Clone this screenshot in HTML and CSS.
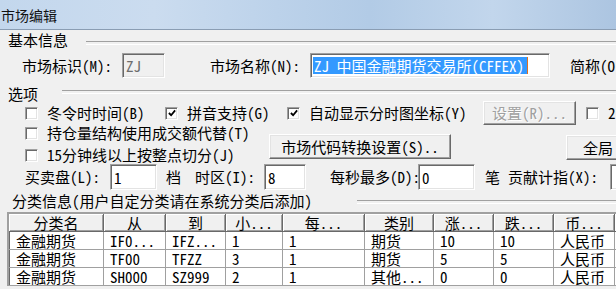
FILE: index.html
```html
<!DOCTYPE html>
<html lang="zh">
<head>
  <meta charset="UTF-8">
  <title>市场编辑</title>
  <link rel="stylesheet" href="styles.css">
</head>
<body>
  <div class="dialog">
    <div class="titlebar">市场编辑</div>

    <div class="panel">
      <div class="group-head head-basic"><span>基本信息</span></div>
      <div class="row row-basic">
        <span class="lbl w-id">市场标识(M):</span>
        <div class="field field-id">ZJ</div>
        <span class="lbl w-name">市场名称(N):</span>
        <div class="field field-name"><span class="sel">ZJ 中国金融期货交易所(CFFEX)</span></div>
        <span class="lbl">简称(O</span>
      </div>

      <div class="group-head head-opts"><span>选项</span></div>
      <div class="row row-a">
        <label class="check w-dst"><span class="box"></span>冬令时时间(B)</label>
        <label class="check w-pinyin"><span class="box"><svg viewBox="0 0 9 9"><path d="M1 4.5 L3.5 7 L8 1.5"/></svg></span>拼音支持(G)</label>
        <label class="check w-auto"><span class="box"><svg viewBox="0 0 9 9"><path d="M1 4.5 L3.5 7 L8 1.5"/></svg></span>自动显示分时图坐标(Y)</label>
        <button class="btn btn-set" disabled>设置(R)...</button>
        <label class="check"><span class="box"></span>2</label>
      </div>

      <div class="row row-bc">
        <div class="col-checks">
          <label class="check"><span class="box"></span>持仓量结构使用成交额代替(T)</label>
          <label class="check"><span class="box"></span>15分钟线以上按整点切分(J)</label>
        </div>
        <button class="btn btn-code">市场代码转换设置(S)..</button>
        <button class="btn btn-global">全局</button>
      </div>

      <div class="row row-num">
        <span class="lbl w-depth">买卖盘(L):</span>
        <div class="field spin w-in1">1</div>
        <span class="lbl w-dang">档</span>
        <span class="lbl w-tz">时区(I):</span>
        <div class="field spin w-in2">8</div>
        <span class="lbl w-max">每秒最多(D):</span>
        <div class="field spin w-in3">0</div>
        <span class="lbl w-bi">笔</span>
        <span class="lbl w-contrib">贡献计指(X):</span>
        <div class="field spin w-in4"></div>
      </div>

      <div class="group-head head-cat"><span>分类信息(用户自定分类请在系统分类后添加)</span></div>
      <div class="grid-wrap">
        <table class="grid">
          <colgroup>
            <col style="width:95px"><col style="width:62px"><col style="width:60px">
            <col style="width:57px"><col style="width:82px"><col style="width:69px">
            <col style="width:60px"><col style="width:60px"><col style="width:61px">
            <col style="width:60px">
          </colgroup>
          <thead>
            <tr>
              <th>分类名</th><th>从</th><th>到</th><th>小...</th><th>每...</th>
              <th>类别</th><th>涨...</th><th>跌...</th><th>币...</th><th></th>
            </tr>
          </thead>
          <tbody>
            <tr>
              <td>金融期货</td><td>IF0...</td><td>IFZ...</td><td>1</td><td>1</td>
              <td>期货</td><td>10</td><td>10</td><td>人民币</td><td></td>
            </tr>
            <tr>
              <td>金融期货</td><td>TF00</td><td>TFZZ</td><td>3</td><td>1</td>
              <td>期货</td><td>5</td><td>5</td><td>人民币</td><td></td>
            </tr>
            <tr>
              <td>金融期货</td><td>SH000</td><td>SZ999</td><td>2</td><td>1</td>
              <td>其他...</td><td>0</td><td>0</td><td>人民币</td><td></td>
            </tr>
          </tbody>
        </table>
      </div>
    </div>
  </div>
</body>
</html>
```

FILE: styles.css
```css
* {
  margin: 0; padding: 0; box-sizing: border-box;
}
html, body {
  width: 616px;
  height: 289px;
  overflow: hidden;
  background: #f0f0f0;
}
body {
  font-family: "Noto Sans Mono CJK SC", "Noto Sans CJK SC", sans-serif;
  font-size: 15px;
  line-height: 16px;
  color: #000;
}
.dialog {
  width: 616px;
  height: 289px;
  overflow: hidden;
}
.titlebar {
  height: 30px;
  padding: 6px 0 0 1px;
  font-family: "Noto Sans CJK SC", sans-serif;
  font-size: 14px;
  line-height: 18px;
  color: #111;
  background: linear-gradient(to right, #c3d7ed 0%, #cbdcef 25%, #bcd2ea 45%, #b2cbe6 60%, #c2d6ec 80%, #acc5e1 100%);
  border-bottom: 1px solid #8a9db3;
}
.panel {
  padding-left: 8px;
}
.row {
  display: flex;
  align-items: center;
  white-space: nowrap;
}
.lbl {
  flex: none;
}

/* group headers with etched rule */
.group-head {
  display: flex;
  white-space: nowrap;
}
.group-head span {
  flex: none;
}
.group-head::after {
  content: "";
  flex: 1;
  height: 2px;
  border-top: 1px solid #a0a0a0;
  border-bottom: 1px solid #fff;
}
.head-basic { margin-top: 2px; height: 16px; }
.head-basic span { width: 78px; }
.head-basic::after { margin-top: 9px; }
.head-opts { margin-top: 8px; height: 15px; }
.head-opts span { width: 54px; }
.head-opts::after { margin-top: 4px; }
.head-cat { margin-top: 3px; height: 16px; padding-left: 4px; }
.head-cat span { width: 345px; }
.head-cat::after { margin-top: 7px; }

/* sunken text fields */
.field {
  flex: none;
  height: 25px;
  background: #fff;
  border: 1px solid;
  border-color: #a0a0a0 #fff #fff #a0a0a0;
  box-shadow: inset 1px 1px #696969, inset -1px -1px #e3e3e3;
  padding: 3px 0 0 3px;
  line-height: 17px;
}
.row-basic { margin-top: 5px; height: 25px; }
.row-basic .w-id { width: 100px; margin-left: 14px; }
.field-id { width: 43px; background: #f0f0f0; color: #6d6d6d; }
.row-basic .w-name { width: 100px; margin-left: 45px; }
.field-name { width: 240px; margin-right: 20px; padding-left: 2px; }
.sel {
  display: inline-block;
  width: 215px;
  background: #3399ff;
  color: #fff;
  border-right: 1px solid #e07020;
  padding-left: 1px;
}

/* checkboxes */
.check {
  display: flex;
  align-items: center;
  flex: none;
}
.box {
  flex: none;
  width: 13px;
  height: 13px;
  margin-right: 9px;
  background: #fff;
  border: 1px solid;
  border-color: #a0a0a0 #fff #fff #a0a0a0;
  box-shadow: inset 1px 1px #696969, inset -1px -1px #e3e3e3;
  display: flex;
  align-items: center;
  justify-content: center;
}
.box svg {
  width: 8px;
  height: 8px;
  fill: none;
  stroke: #000;
  stroke-width: 2;
}
.row-a { height: 24px; padding-left: 17px; }
.w-dst { width: 140px; }
.w-pinyin { width: 122px; }
.w-auto { width: 196px; }

/* push buttons */
.btn {
  flex: none;
  height: 24px;
  font: inherit;
  color: #000;
  background: #f0f0f0;
  border: 1px solid;
  border-color: #fff #696969 #696969 #fff;
  box-shadow: inset -1px -1px #a0a0a0, inset 1px 1px #e3e3e3;
  text-align: center;
}
.btn-set { width: 93px; margin-right: 10px; color: #a0a0a0; text-shadow: 1px 1px #fff; }
.row-bc { margin-top: -3px; align-items: flex-start; padding-left: 17px; }
.col-checks { width: 244px; flex: none; }
.col-checks .check { height: 22px; }
.btn-code { width: 182px; height: 25px; margin-top: 12px; }
.btn-global { width: 64px; height: 25px; margin-top: 13px; margin-left: 115px; }

/* numeric row */
.row-num { margin-top: -2px; height: 26px; padding-left: 17px; }
.spin { height: 26px; padding-top: 4px; }
.w-depth { width: 85px; }
.w-in1 { width: 47px; }
.w-dang { width: 38px; padding-left: 9px; }
.w-tz { width: 69px; }
.w-in2 { width: 42px; }
.w-max { width: 88px; margin-left: 24px; }
.w-in3 { width: 57px; }
.w-bi { width: 33px; padding-left: 10px; }
.w-contrib { width: 102px; }
.w-in4 { width: 50px; }

/* category list */
.grid-wrap {
  margin: 3px 0 0 -1px;
  border-top: 2px solid #a0a0a0;
  border-left: 2px solid #a0a0a0;
  box-shadow: inset 1px 1px #696969;
  width: 700px;
  background: #fff;
}
.grid {
  border-collapse: separate;
  border-spacing: 0;
  table-layout: fixed;
  width: 666px;
}
.grid th {
  height: 18px;
  font-weight: normal;
  text-align: center;
  background: #f0f0f0;
  border-right: 1px solid #696969;
  border-bottom: 1px solid #696969;
  box-shadow: inset 1px 1px #fff, inset -1px -1px #a0a0a0;
  line-height: 17px;
}
.grid td {
  height: 18px;
  padding-left: 6px;
  border-right: 1px solid #a0a0a0;
  border-bottom: 1px solid #a0a0a0;
  line-height: 17px;
  white-space: nowrap;
}
.grid td:first-child { padding-left: 7px; }
```
